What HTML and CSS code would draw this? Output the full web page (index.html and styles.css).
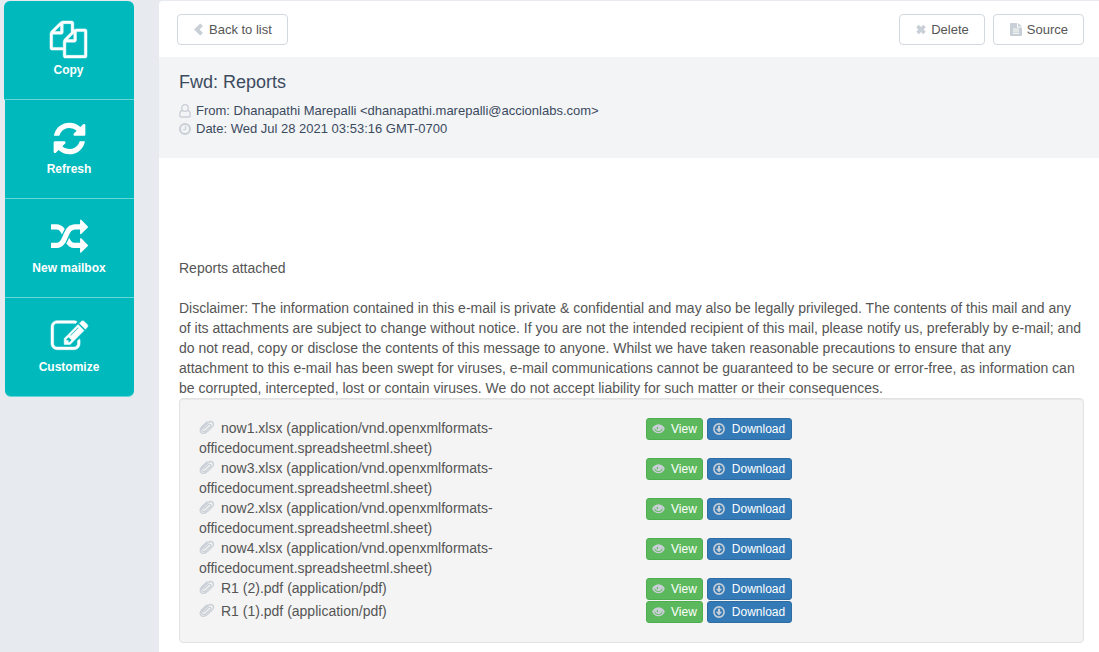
FILE: index.html
```html
<!DOCTYPE html>
<html lang="en">
<head>
<meta charset="utf-8">
<title>Fwd: Reports</title>
<link rel="stylesheet" href="styles.css">
</head>
<body>
<svg class="defs" aria-hidden="true">
  <symbol id="clip" viewBox="0 0 16 16"><path d="M4.900 9.900 9.600 5.600q1.200-.9 2 0t-.2 1.900L6.800 11.800q-1.900 1.500-3.300.2t.1-3.200L9.200 3.600q2.500-2 4.400-.3t-.1 4.300L8.300 12.600Q5 15.300 2.300 13.700Q0 11.500 2.300 8.300L7.900 2.900" fill="none" stroke="currentColor" stroke-width="1.300" stroke-linecap="round"/></symbol>
  <symbol id="eye" viewBox="0 0 14 12"><path fill="currentColor" fill-rule="evenodd" d="M7 .8C3.300.8 1 3.200.2 5.500 1.200 8.600 3.800 10.700 7 10.700s5.800-2.100 6.800-5.200C13 3.200 10.700.8 7 .8ZM3.200 4.200Q3 8 7 8.300 11 8 10.800 4.200 12.600 8.900 7 9.200 1.400 8.900 3.200 4.200ZM5.700 3.700Q4.700 4.800 5.300 6q.6.500 1.300 0Q5.700 5.200 6.500 4.400 6.400 3.700 5.700 3.700Z"/></symbol>
  <symbol id="down" viewBox="0 0 12 12"><circle cx="6" cy="6" r="5.100" fill="none" stroke="currentColor" stroke-width="1.600"/><path fill="currentColor" d="M4.900 2.700h2.200v3h2.100L6 9.400 2.800 5.700h2.100z"/></symbol>
</svg>
<div class="layout">
  <nav class="sidebar">
    <button class="tool" type="button"><svg viewBox="0 0 1792 1792"><path class="heavy" d="M1696 384q40 0 68 28t28 68v1216q0 40-28 68t-68 28h-960q-40 0-68-28t-28-68v-288h-544q-40 0-68-28t-28-68v-672q0-40 20-88t48-76l408-408q28-28 76-48t88-20h416q40 0 68 28t28 68v328q68-40 128-40h416zm-544 213l-299 299h299v-299zm-640-384l-299 299h299v-299zm196 647l316-316v-416h-384v416q0 40-28 68t-68 28h-416v640h512v-256q0-40 20-88t48-76zm956 804v-1152h-384v416q0 40-28 68t-68 28h-416v640h896z"/></svg><span>Copy</span></button>
    <button class="tool" type="button"><svg viewBox="0 0 1792 1792"><path d="M1639 1056q0 5-1 7-64 268-268 434.5t-478 166.5q-146 0-282.5-55t-243.5-157l-129 129q-19 19-45 19t-45-19-19-45v-448q0-26 19-45t45-19h448q26 0 45 19t19 45-19 45l-137 137q71 66 161 102t187 36q134 0 250-65t186-179q11-17 53-117 8-23 30-23h192q13 0 22.5 9.5t9.5 22.5zm25-800v448q0 26-19 45t-45 19h-448q-26 0-45-19t-19-45 19-45l138-138q-148-137-349-137-134 0-250 65t-186 179q-11 17-53 117-8 23-30 23h-199q-13 0-22.5-9.5t-9.5-22.5v-7q65-268 270-434.5t480-166.5q146 0 284 55.5t245 156.5l130-129q19-19 45-19t45 19 19 45z"/></svg><span>Refresh</span></button>
    <button class="tool" type="button"><svg viewBox="0 0 1792 1792"><path d="M666 481q-60 92-137 273-22-45-37-72.5t-40.5-63.5-51-56.5-63-35-81.5-14.5h-224q-14 0-23-9t-9-23v-192q0-14 9-23t23-9h224q250 0 410 225zm1126 799q0 14-9 23l-320 320q-9 9-23 9-13 0-22.5-9.5t-9.5-22.5v-192q-32 0-85 .5t-81 1-73-1-71-5-64-10.5-63-18.5-58-28.5-59-40-55-53.5-56-69.5q59-93 136-273 22 45 37 72.5t40.5 63.5 51 56.5 63 35 81.5 14.5h256v-192q0-14 9-23t23-9q12 0 24 10l319 319q9 9 9 23zm0-896q0 14-9 23l-320 320q-9 9-23 9-13 0-22.5-9.5t-9.5-22.5v-192h-256q-48 0-87 15t-69 45-51 61.5-45 77.5q-32 62-78 171-29 66-49.5 111t-54 105-64 100-74 83-90 68.5-106.5 42-128 16.5h-224q-14 0-23-9t-9-23v-192q0-14 9-23t23-9h224q48 0 87-15t69-45 51-61.5 45-77.5q32-62 78-171 29-66 49.5-111t54-105 64-100 74-83 90-68.5 106.5-42 128-16.5h256v-192q0-14 9-23t23-9q12 0 24 10l319 319q9 9 9 23z"/></svg><span>New mailbox</span></button>
    <button class="tool" type="button"><svg viewBox="0 0 1792 1792"><path class="heavy" d="M888 1184l116-116-152-152-116 116v56h96v96h56zm440-720q-16-16-33 1l-350 350q-17 17-1 33t33-1l350-350q17-17 1-33zm80 594v190q0 119-84.5 203.5t-203.5 84.5h-832q-119 0-203.5-84.5t-84.5-203.5v-832q0-119 84.5-203.5t203.5-84.5h832q63 0 117 25 15 7 18 23 3 17-9 29l-49 49q-14 14-32 8-23-6-45-6h-832q-66 0-113 47t-47 113v832q0 66 47 113t113 47h832q66 0 113-47t47-113v-126q0-13 9-22l64-64q15-15 35-7t20 29zm-96-738l288 288-672 672h-288v-288zm444 132l-92 92-288-288 92-92q28-28 68-28t68 28l152 152q28 28 28 68t-28 68z"/></svg><span>Customize</span></button>
  </nav>
  <main class="mail">
    <div class="toolbar">
      <button class="btn" type="button"><svg class="icon" viewBox="0 0 12 12"><path fill="currentColor" d="M7.200 0 10 2.400 6.600 6 10 9.600 7.200 12 1 6z"/></svg>Back to list</button>
      <div class="actions">
        <button class="btn" type="button"><svg class="icon" viewBox="0 0 12 12"><path fill="currentColor" d="M1.200 3.800 3.800 1.200 6 3.400 8.200 1.200l2.600 2.600L8.600 6l2.200 2.200-2.600 2.600L6 8.600l-2.200 2.200-2.600-2.600L3.400 6z"/></svg>Delete</button>
        <button class="btn" type="button"><svg class="icon doc" viewBox="0 0 12 13"><path fill="currentColor" fill-rule="evenodd" d="M.8 0H7v4.500h5V12.200q0 .8-.8.8H.8Q0 13 0 12.200V.8Q0 0 .8 0ZM8 0l4 3.500H8ZM3 5.500v1h6v-1ZM3 7.600v1h6v-1ZM3 9.700v1h6v-1Z"/></svg>Source</button>
      </div>
    </div>
    <header class="head">
      <h1>Fwd: Reports</h1>
      <p class="meta"><svg class="meta-icon" viewBox="0 0 12 14" fill="none" stroke="currentColor" stroke-width="1.300"><path d="M3.200 6.500Q.7 7.100.7 11q0 2 2 2h6.600q2 0 2-2 0-3.900-2.500-4.500"/><circle cx="6" cy="4" r="3.300"/></svg>From: Dhanapathi Marepalli &lt;dhanapathi.marepalli@accionlabs.com&gt;</p>
      <p class="meta"><svg class="meta-icon" viewBox="0 0 12 14" fill="none" stroke="currentColor"><circle cx="6" cy="7" r="5" stroke-width="2"/><path d="M6.500 4v3.500H4" stroke-width="1.200"/></svg>Date: Wed Jul 28 2021 03:53:16 GMT-0700</p>
    </header>
    <section class="body">
      <p>Reports attached</p>
      <p>Disclaimer: The information contained in this e-mail is private &amp; confidential and may also be legally privileged. The contents of this mail and any of its attachments are subject to change without notice. If you are not the intended recipient of this mail, please notify us, preferably by e-mail; and do not read, copy or disclose the contents of this message to anyone. Whilst we have taken reasonable precautions to ensure that any attachment to this e-mail has been swept for viruses, e-mail communications cannot be guaranteed to be secure or error-free, as information can be corrupted, intercepted, lost or contain viruses. We do not accept liability for such matter or their consequences.</p>
      <ul class="files">
        <li><span class="name"><svg class="clip"><use href="#clip"/></svg>now1.xlsx (application/vnd.openxmlformats-officedocument.spreadsheetml.sheet)</span><span class="links"><button class="xs view" type="button"><svg class="eye"><use href="#eye"/></svg>View</button><button class="xs download" type="button"><svg class="down"><use href="#down"/></svg>Download</button></span></li>
        <li><span class="name"><svg class="clip"><use href="#clip"/></svg>now3.xlsx (application/vnd.openxmlformats-officedocument.spreadsheetml.sheet)</span><span class="links"><button class="xs view" type="button"><svg class="eye"><use href="#eye"/></svg>View</button><button class="xs download" type="button"><svg class="down"><use href="#down"/></svg>Download</button></span></li>
        <li><span class="name"><svg class="clip"><use href="#clip"/></svg>now2.xlsx (application/vnd.openxmlformats-officedocument.spreadsheetml.sheet)</span><span class="links"><button class="xs view" type="button"><svg class="eye"><use href="#eye"/></svg>View</button><button class="xs download" type="button"><svg class="down"><use href="#down"/></svg>Download</button></span></li>
        <li><span class="name"><svg class="clip"><use href="#clip"/></svg>now4.xlsx (application/vnd.openxmlformats-officedocument.spreadsheetml.sheet)</span><span class="links"><button class="xs view" type="button"><svg class="eye"><use href="#eye"/></svg>View</button><button class="xs download" type="button"><svg class="down"><use href="#down"/></svg>Download</button></span></li>
        <li><span class="name"><svg class="clip"><use href="#clip"/></svg>R1 (2).pdf (application/pdf)</span><span class="links"><button class="xs view" type="button"><svg class="eye"><use href="#eye"/></svg>View</button><button class="xs download" type="button"><svg class="down"><use href="#down"/></svg>Download</button></span></li>
        <li><span class="name"><svg class="clip"><use href="#clip"/></svg>R1 (1).pdf (application/pdf)</span><span class="links"><button class="xs view" type="button"><svg class="eye"><use href="#eye"/></svg>View</button><button class="xs download" type="button"><svg class="down"><use href="#down"/></svg>Download</button></span></li>
      </ul>
    </section>
  </main>
</div>
</body>
</html>
```
FILE: styles.css
```css
* { box-sizing: border-box; }
body {
  margin: 0;
  background: #e7ebf0;
  color: #555;
  font: 14px/20px "Liberation Sans", Arial, sans-serif;
}
button { font-family: inherit; cursor: pointer; }
h1, p, ul { margin: 0; padding: 0; }
.defs { display: none; }
.layout {
  display: grid;
  grid-template-columns: 130px 1fr;
  gap: 25px;
  min-height: 100vh;
  padding: 1px 0 0 4px;
}
.sidebar { display: flex; flex-direction: column; }
.tool {
  display: flex;
  flex-direction: column;
  align-items: center;
  gap: 2px;
  height: 99px;
  padding: 20px 1px 0 0;
  border: 0;
  border-bottom: 1px solid #66d6d7;
  background: #00b9bc;
  color: #fff;
  font-size: 12px;
  font-weight: bold;
  line-height: 20px;
}
.tool + .tool { margin-left: 1px; }
.tool:first-child { border-radius: 6px 6px 0 0; }
.tool:last-child { border-radius: 0 0 6px 6px; }
.tool svg { width: 37px; height: 37px; fill: currentColor; overflow: visible; }
.heavy { stroke: currentColor; stroke-width: 24; }
.mail { background: #fff; border-radius: 4px 0 0 0; }
.toolbar {
  display: flex;
  justify-content: space-between;
  padding: 13px 15px 12px 18px;
}
.actions { display: flex; gap: 8px; }
.btn {
  display: flex;
  align-items: center;
  gap: 4px;
  height: 31px;
  padding: 0 15px;
  border: 1px solid #d3d8de;
  border-radius: 4px;
  background: #fff;
  color: #555;
  font-size: 13px;
}
.icon { width: 12px; height: 13px; color: #c9cfd6; }
.doc { width: 14px; }
.head {
  min-height: 101px;
  padding: 15px 20px 20px;
  background: #f2f4f6;
  color: #3c4a5e;
}
.head h1 { margin-bottom: 10px; font-size: 18px; font-weight: normal; line-height: 20px; }
.meta { display: flex; align-items: center; gap: 5px; font-size: 13px; line-height: 18px; }
.meta-icon { width: 12px; height: 14px; color: #c9cfd6; }
.body { padding: 100px 15px 9px 20px; }
.body p + p { margin-top: 20px; }
.files {
  padding: 19px;
  border: 1px solid #e3e3e3;
  border-radius: 4px;
  background: #f4f4f4;
  box-shadow: inset 0 1px 1px rgba(0, 0, 0, .05);
  list-style: none;
}
.files li {
  display: grid;
  grid-template-columns: 447px 1fr;
  align-items: start;
  min-height: 23px;
}
.files li:last-child { min-height: 22px; }
.name { padding-right: 90px; }
.clip { width: 16px; height: 16px; margin-right: 6px; vertical-align: -2px; color: #c9cfd6; }
.links { display: flex; gap: 4px; }
.xs {
  display: flex;
  align-items: center;
  height: 22px;
  padding: 0 5px;
  border: 1px solid;
  border-radius: 3px;
  color: #fff;
  font-size: 12px;
}
.view { background: #5cb85c; border-color: #4cae4c; }
.download { padding-right: 6px; background: #337ab7; border-color: #2e6da4; }
.eye, .down { height: 12px; color: #c9cfd6; }
.eye { width: 13px; margin-right: 6px; }
.down { width: 12px; margin-right: 7px; }
```
